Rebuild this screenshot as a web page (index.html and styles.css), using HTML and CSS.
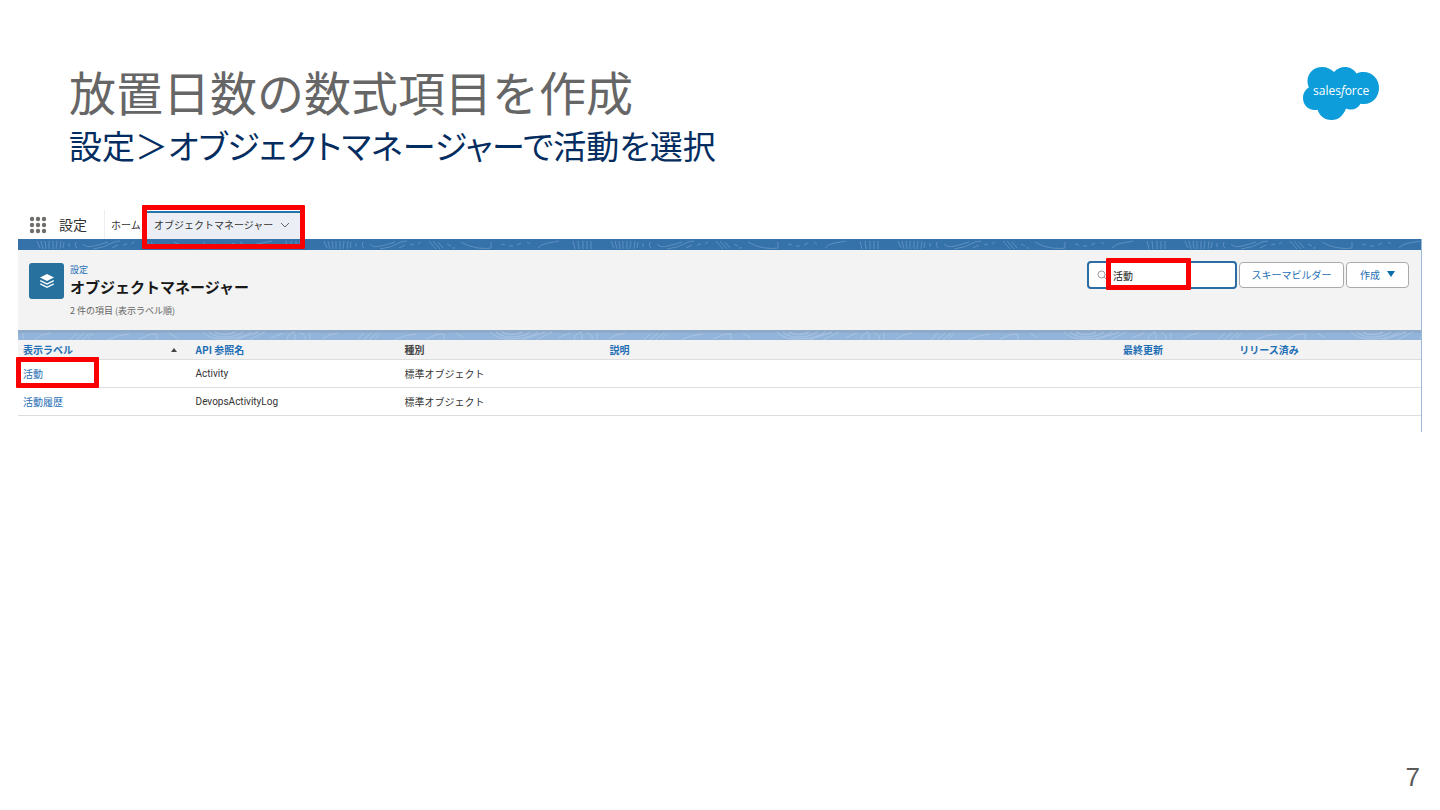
FILE: index.html
```html
<!DOCTYPE html>
<html lang="ja">
<head>
    <meta charset="UTF-8">
    <meta name="viewport" content="width=device-width, initial-scale=1.0">
    <title>放置日数の数式項目を作成</title>
    <link rel="stylesheet" href="styles.css">
</head>
<body>
    <main class="slide">
        <header class="slide-header">
            <div>
                <h1>放置日数の数式項目を作成</h1>
                <h2>設定＞オブジェクトマネージャーで活動を選択</h2>
            </div>
            <svg class="logo" viewBox="0 0 78 56" role="img" aria-label="salesforce">
                <path fill="#0d9dda" d="M32 7C35 3.500 39 2 43 2C48 2 52 4.500 54.500 8.500C57 7.400 59 7 61.500 7C70.500 7 77 14 77 23C77 32 70.500 39 62 39C60.500 39 59.500 38.900 58.500 38.700C56.500 42.500 53 44.500 49 44.500C47 44.500 45.500 44.100 44 43.400C41.500 50 37 55 29.500 55C22 55 17.500 50.500 15.500 44.800C14.500 45 13.500 45.100 12.500 45.100C6 45.100 1 39.500 1 33C1 28.500 3.200 24.500 7 22.300C6 20.500 5.500 18.500 5.500 16C5.500 8 12 2 20 2C25 2 29 4 32 7Z"/>
                <text x="11" y="30" class="logo-text">sales<tspan font-style="italic">f</tspan>orce</text>
            </svg>
        </header>

        <section class="capture">
            <nav class="app-nav">
                <button class="waffle" aria-label="アプリケーションランチャー">
                    <svg viewBox="0 0 18 18" width="18" height="18" fill="#706e6b">
                        <circle cx="3" cy="3" r="2.200"/><circle cx="9" cy="3" r="2.200"/><circle cx="15" cy="3" r="2.200"/>
                        <circle cx="3" cy="9" r="2.200"/><circle cx="9" cy="9" r="2.200"/><circle cx="15" cy="9" r="2.200"/>
                        <circle cx="3" cy="15" r="2.200"/><circle cx="9" cy="15" r="2.200"/><circle cx="15" cy="15" r="2.200"/>
                    </svg>
                </button>
                <span class="app-name">設定</span>
                <a class="home" href="#">ホーム</a>
                <div class="tab">
                    <a href="#">オブジェクトマネージャー</a>
                    <svg viewBox="0 0 10 6" width="10" height="6" fill="none" stroke="#666"><path d="M1 1L5 5L9 1"/></svg>
                    <span class="mark mark-tab"></span>
                </div>
            </nav>

            <div class="page-body">
                <svg class="band band-top" aria-hidden="true">
                    <defs>
                        <pattern id="contour" x="18" width="287" height="11" patternUnits="userSpaceOnUse">
                            <g fill="none" stroke="#5b8ec0" stroke-width="1">
                                <path d="M1 2L4 9M5 2L7 10M9 2L10 10M13 2V10M17 2V10M21 2L20 10M25 2L24 10M28 3L27 9"/>
                                <path d="M33 4V8M40 3Q38 7 41 9M47 5Q50 9 58 7T72 3M57 10Q68 9 78 3L84 2"/>
                                <path d="M76 9L82 6M87 6L91 5M95 5L98 3"/>
                                <path d="M106 2L113 10M110 2L117 10M115 3L120 9M124 5L128 7M129 9H132"/>
                                <path d="M138 3Q146 8 155 9T168 9V3"/>
                                <path d="M178 5L182 6M186 7H190M194 6L198 4M204 3L207 5"/>
                                <path d="M215 9Q218 5 225 4T236 2"/>
                                <path d="M250 2L252 10M255 2L256 10M260 2V10M264 2V10M268 2V10"/>
                            </g>
                        </pattern>
                    </defs>
                    <rect width="100%" height="100%" fill="#3572aa"/>
                    <rect width="100%" height="100%" fill="url(#contour)"/>
                </svg>

                <header class="page-header">
                    <span class="page-icon">
                        <svg viewBox="0 0 16 16" width="16" height="16" fill="#fff">
                            <path d="M8 1L15 4.500L8 8L1 4.500Z"/>
                            <path d="M1.500 7L8 10.200L14.500 7L15 8.300L8 11.800L1 8.300Z"/>
                            <path d="M1.500 10.300L8 13.500L14.500 10.300L15 11.600L8 15.100L1 11.600Z"/>
                        </svg>
                    </span>
                    <div class="page-title">
                        <a href="#">設定</a>
                        <h3>オブジェクトマネージャー</h3>
                        <p>2 件の項目 (表示ラベル順)</p>
                    </div>
                    <div class="actions">
                        <div class="search">
                            <svg viewBox="0 0 10 10" width="10" height="10" fill="none" stroke="#999"><circle cx="4.500" cy="4.500" r="3.500"/><path d="M7 7L9.500 9.500"/></svg>
                            <input type="text" value="活動" aria-label="検索">
                            <span class="mark mark-search"></span>
                        </div>
                        <button class="btn btn-schema">スキーマビルダー</button>
                        <button class="btn btn-create">作成 <svg viewBox="0 0 8 6" width="8" height="6" fill="#0b6cab"><path d="M0 0H8L4 6Z"/></svg></button>
                    </div>
                </header>

                <svg class="band band-bottom" aria-hidden="true">
                    <defs>
                        <pattern id="contour-light" x="-5" width="287" height="10" patternUnits="userSpaceOnUse">
                            <g fill="none" stroke="#a8c3e2" stroke-width="1">
                                <path d="M0 3Q7 5 5 10M10 3V9M22 9Q28 4 38 3M57 10L64 3M63 10L71 3M69 10L77 3M75 9L80 3"/>
                                <path d="M94 10Q104 5 116 4M126 9L131 7Q137 3 144 4V10M156 3L164 8"/>
                                <path d="M190 2Q197 10 214 9T238 2M196 2Q203 8 214 7T230 2M202 2Q211 7 222 2M222 10L245 2M236 10L252 2"/>
                                <path d="M258 8L270 3M274 10Q274 4 282 2M282 10V4"/>
                            </g>
                        </pattern>
                    </defs>
                    <rect width="100%" height="100%" fill="#93b4da"/>
                    <rect width="100%" height="3" fill="#8daac8"/>
                    <rect width="100%" height="100%" fill="url(#contour-light)"/>
                </svg>

                <table>
                    <colgroup>
                        <col class="col-label">
                        <col class="col-api">
                        <col class="col-type">
                        <col class="col-desc">
                        <col class="col-date">
                        <col>
                    </colgroup>
                    <thead>
                        <tr>
                            <th scope="col"><span class="sorted">表示ラベル <svg viewBox="0 0 6 4" width="6" height="4" fill="#444"><path d="M0 4L3 0L6 4Z"/></svg></span></th>
                            <th scope="col">API 参照名</th>
                            <th scope="col" class="plain">種別</th>
                            <th scope="col">説明</th>
                            <th scope="col">最終更新</th>
                            <th scope="col">リリース済み</th>
                        </tr>
                    </thead>
                    <tbody>
                        <tr>
                            <td class="marked"><a href="#">活動</a><span class="mark mark-row"></span></td>
                            <td class="api-name">Activity</td>
                            <td>標準オブジェクト</td>
                            <td></td>
                            <td></td>
                            <td></td>
                        </tr>
                        <tr>
                            <td><a href="#">活動履歴</a></td>
                            <td class="api-name">DevopsActivityLog</td>
                            <td>標準オブジェクト</td>
                            <td></td>
                            <td></td>
                            <td></td>
                        </tr>
                    </tbody>
                </table>
            </div>
        </section>

        <footer>7</footer>
    </main>
</body>
</html>
```

FILE: styles.css
```css
* {
    box-sizing: border-box;
}

body {
    margin: 0;
    font-family: "Noto Sans CJK JP", sans-serif;
    background-color: white;
}

h1, h2, h3, p {
    margin: 0;
    font-weight: normal;
}

a {
    color: #1f6fb5;
    text-decoration: none;
}

svg {
    display: block;
}

button, input {
    font-family: inherit;
    font-size: 10px;
}

.slide {
    display: flex;
    flex-direction: column;
    min-height: 100vh;
    padding: 61px 18px 16px;
}

.slide-header {
    display: flex;
    justify-content: space-between;
    align-items: flex-start;
    padding: 0 42px 0 51px;
}

h1 {
    font-size: 47px;
    line-height: 60px;
    color: #666;
}

h2 {
    font-size: 33px;
    line-height: 48px;
    color: #032d60;
    font-feature-settings: "palt";
}

.logo {
    width: 78px;
    height: 56px;
    margin-top: 4px;
}

.logo-text {
    font-family: "Open Sans", sans-serif;
    font-size: 12px;
    font-weight: 500;
    fill: white;
}

.capture {
    margin-top: 41px;
    font-size: 10px;
    color: #333;
}

.page-body {
    padding-bottom: 16px;
    border-right: 1px solid #9bb9d6;
}

/* 赤枠 */
.mark {
    position: absolute;
    border: 5px solid #fa0000;
    border-radius: 1px;
    pointer-events: none;
}

.mark-tab {
    inset: -8px -3px -10px -4px;
}

.mark-search {
    inset: -5px 44px -3px 17px;
}

.mark-row {
    top: -3px;
    left: -2px;
    width: 83px;
    height: 31px;
}

.app-nav {
    display: flex;
    align-items: center;
    height: 29px;
    padding-left: 11px;
}

.waffle {
    padding: 0;
    border: 0;
    background: none;
}

.app-name {
    width: 46px;
    margin-left: 12px;
    font-size: 14px;
    line-height: 29px;
    border-right: 1px solid #eee;
}

.home {
    width: 41px;
    padding-left: 6px;
    color: #333;
}

.tab {
    position: relative;
    display: flex;
    align-items: center;
    gap: 7px;
    height: 28px;
    padding: 0 12px 2px 8px;
    border-top: 2px solid #2574a9;
    background-color: #ebeff5;
}

.tab a {
    color: #333;
}

.band {
    width: 100%;
}

.band-top {
    height: 11px;
}

.band-bottom {
    height: 10px;
}

.page-header {
    display: flex;
    align-items: flex-start;
    height: 80px;
    padding: 11px 12px 0 11px;
    background-color: #f3f3f3;
}

.page-icon {
    display: flex;
    justify-content: center;
    align-items: center;
    width: 35px;
    height: 36px;
    margin-top: 2px;
    border-radius: 3px;
    background-color: #27719e;
}

.page-title {
    flex: 1;
    padding-left: 6px;
}

.page-title a {
    display: block;
    font-size: 9px;
    line-height: 18px;
}

h3 {
    font-size: 15px;
    line-height: 16px;
    font-weight: bold;
    color: #181818;
}

.page-title p {
    padding-top: 7px;
    font-size: 9px;
    line-height: 18px;
    color: #666;
}

.actions {
    display: flex;
    align-items: center;
    gap: 2px;
}

.search {
    position: relative;
    display: flex;
    align-items: center;
    gap: 6px;
    width: 150px;
    height: 28px;
    padding-left: 8px;
    border: 2px solid #2c6ca2;
    border-radius: 4px;
    background-color: white;
}

.search input {
    width: 100px;
    padding: 0;
    border: 0;
    outline: 0;
    background: none;
    color: #222;
}

.btn {
    display: flex;
    justify-content: center;
    align-items: center;
    height: 26px;
    padding: 0 0 2px;
    border: 1px solid #aaa;
    border-radius: 4px;
    background-color: white;
    color: #1f6fb5;
}

.btn-schema {
    width: 105px;
}

.btn-create {
    gap: 7px;
    width: 63px;
}

table {
    width: 100%;
    table-layout: fixed;
    border-collapse: separate;
    border-spacing: 0;
}

.col-label {
    width: 12.3%;
}

.col-api {
    width: 14.9%;
}

.col-type {
    width: 14.6%;
}

.col-desc {
    width: 36.6%;
}

.col-date {
    width: 8.3%;
}

th, td {
    padding: 0 5px;
    border-bottom: 1px solid #ddd;
    text-align: left;
}

th {
    height: 20px;
    line-height: 19px;
    background-color: #f3f3f3;
    color: #1f6fb5;
}

td {
    height: 28px;
    line-height: 27px;
}

.api-name {
    font-family: Roboto, sans-serif;
}

.plain {
    color: #444;
}

.sorted {
    display: flex;
    justify-content: space-between;
    align-items: center;
    padding-right: 9px;
}

.marked {
    position: relative;
}

footer {
    margin-top: auto;
    padding-right: 2px;
    font-family: "Liberation Sans", Arial, sans-serif;
    font-size: 26px;
    line-height: 34px;
    text-align: right;
    color: #595959;
}
```
